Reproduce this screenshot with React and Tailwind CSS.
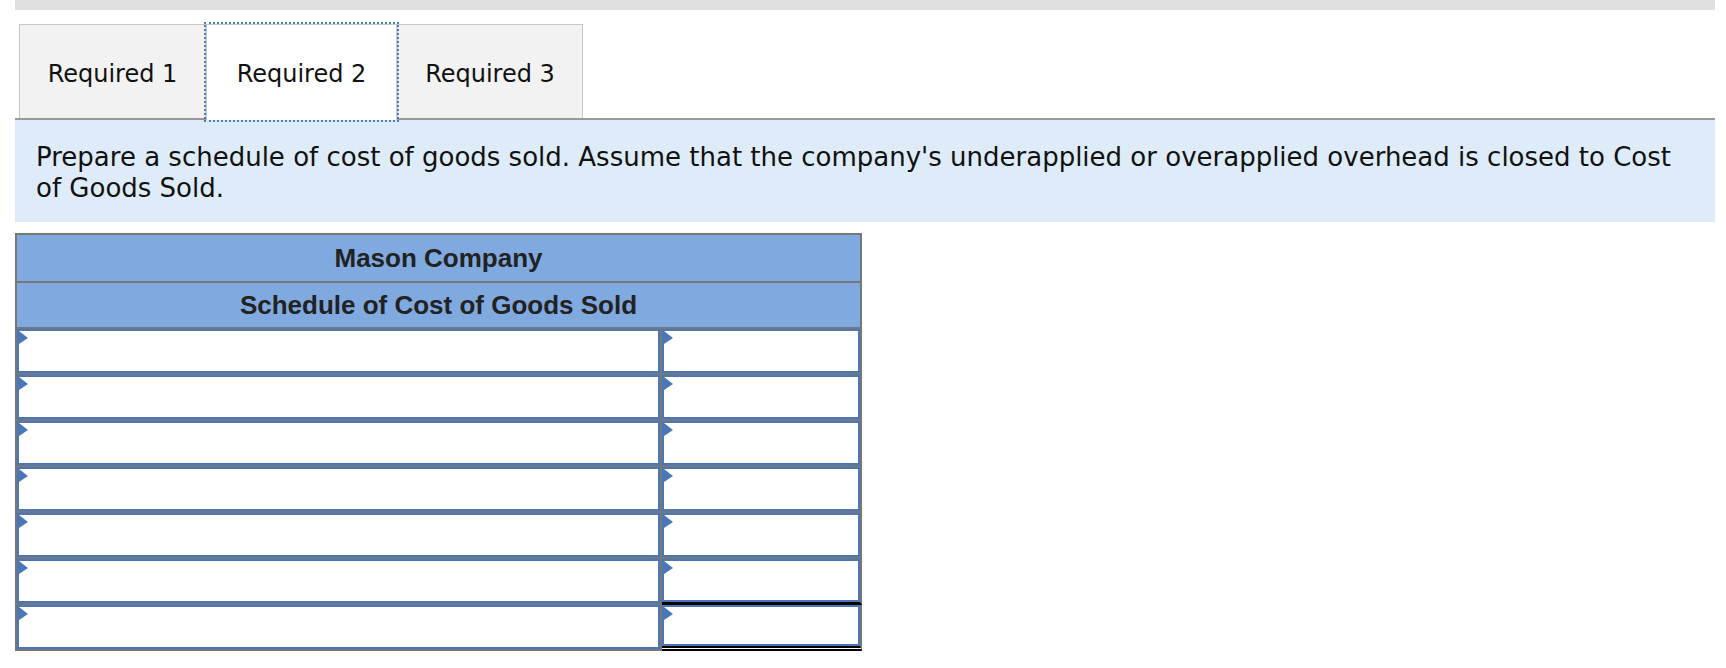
import React from 'react';

const rows = [0, 1, 2, 3, 4, 5, 6];

function Marker() {
  return (
    <span className="absolute left-0 top-0 h-0 w-0 border-b-[6px] border-l-[9px] border-t-[7px] border-y-transparent border-l-[#4a77b7]" />
  );
}

function Tab({ label, active }) {
  return (
    <div
      className={`flex items-center justify-center border border-b-0 border-[#c8c8c8] pt-[5px] text-[24px] text-[#111] ${
        active
          ? 'relative z-10 -mb-[2px] h-[96px] bg-white pb-[2px] outline-2 outline-dotted outline-[#4b7bc4]'
          : 'h-[94px] bg-[#f2f2f2]'
      }`}
    >
      {label}
    </div>
  );
}

export default function App() {
  return (
    <div className="h-[668px] w-[1726px] overflow-hidden bg-white font-['DejaVu_Sans',sans-serif]">
      <div className="ml-[15px] mr-[11px] h-[10px] bg-[#e0e0e0]" />

      <div className="ml-[15px] mr-[11px]">
        {/* tabs */}
        <div className="mt-[14px] flex border-b-2 border-[#999] pl-[4px]">
          <div className="w-[187px]"><Tab label="Required 1" /></div>
          <div className="w-[191px]"><Tab label="Required 2" active /></div>
          <div className="w-[186px]"><Tab label="Required 3" /></div>
        </div>

        {/* instructions */}
        <div className="bg-[#deebf8] px-[21px] pb-[18px] pt-[22px] text-[26px] leading-[31px] text-[#111]">
          Prepare a schedule of cost of goods sold. Assume that the company's underapplied or
          overapplied overhead is closed to Cost of Goods Sold.
        </div>

        {/* schedule table */}
        <div className="mt-[11px] w-[847px] border-l-2 border-t-2 border-[#777] font-['Liberation_Sans',Arial,sans-serif]">
          <div className="flex h-[48px] items-center justify-center border-b-2 border-r-2 border-[#777] bg-[#80aadf] text-[26px] font-bold text-[#222]">
            Mason Company
          </div>
          <div className="flex h-[46px] items-center justify-center border-b-2 border-r-2 border-[#777] bg-[#80aadf] text-[26px] font-bold text-[#222]">
            Schedule of Cost of Goods Sold
          </div>
          {rows.map((i) => (
            <div key={i} className="flex h-[46px]">
              <div className="w-[645px] border-b-2 border-r-2 border-[#777]">
                <div className="relative h-full border-2 border-[#4a77b7] bg-white">
                  <Marker />
                </div>
              </div>
              <div
                className={`flex-1 border-r-2 border-[#777] ${
                  i === 5
                    ? 'border-b-[3px] border-b-black'
                    : i === 6
                    ? 'border-b-[5px] border-double border-b-black'
                    : 'border-b-2'
                }`}
              >
                <div className="relative h-full border-2 border-[#4a77b7] bg-white">
                  <Marker />
                </div>
              </div>
            </div>
          ))}
        </div>
      </div>
    </div>
  );
}
